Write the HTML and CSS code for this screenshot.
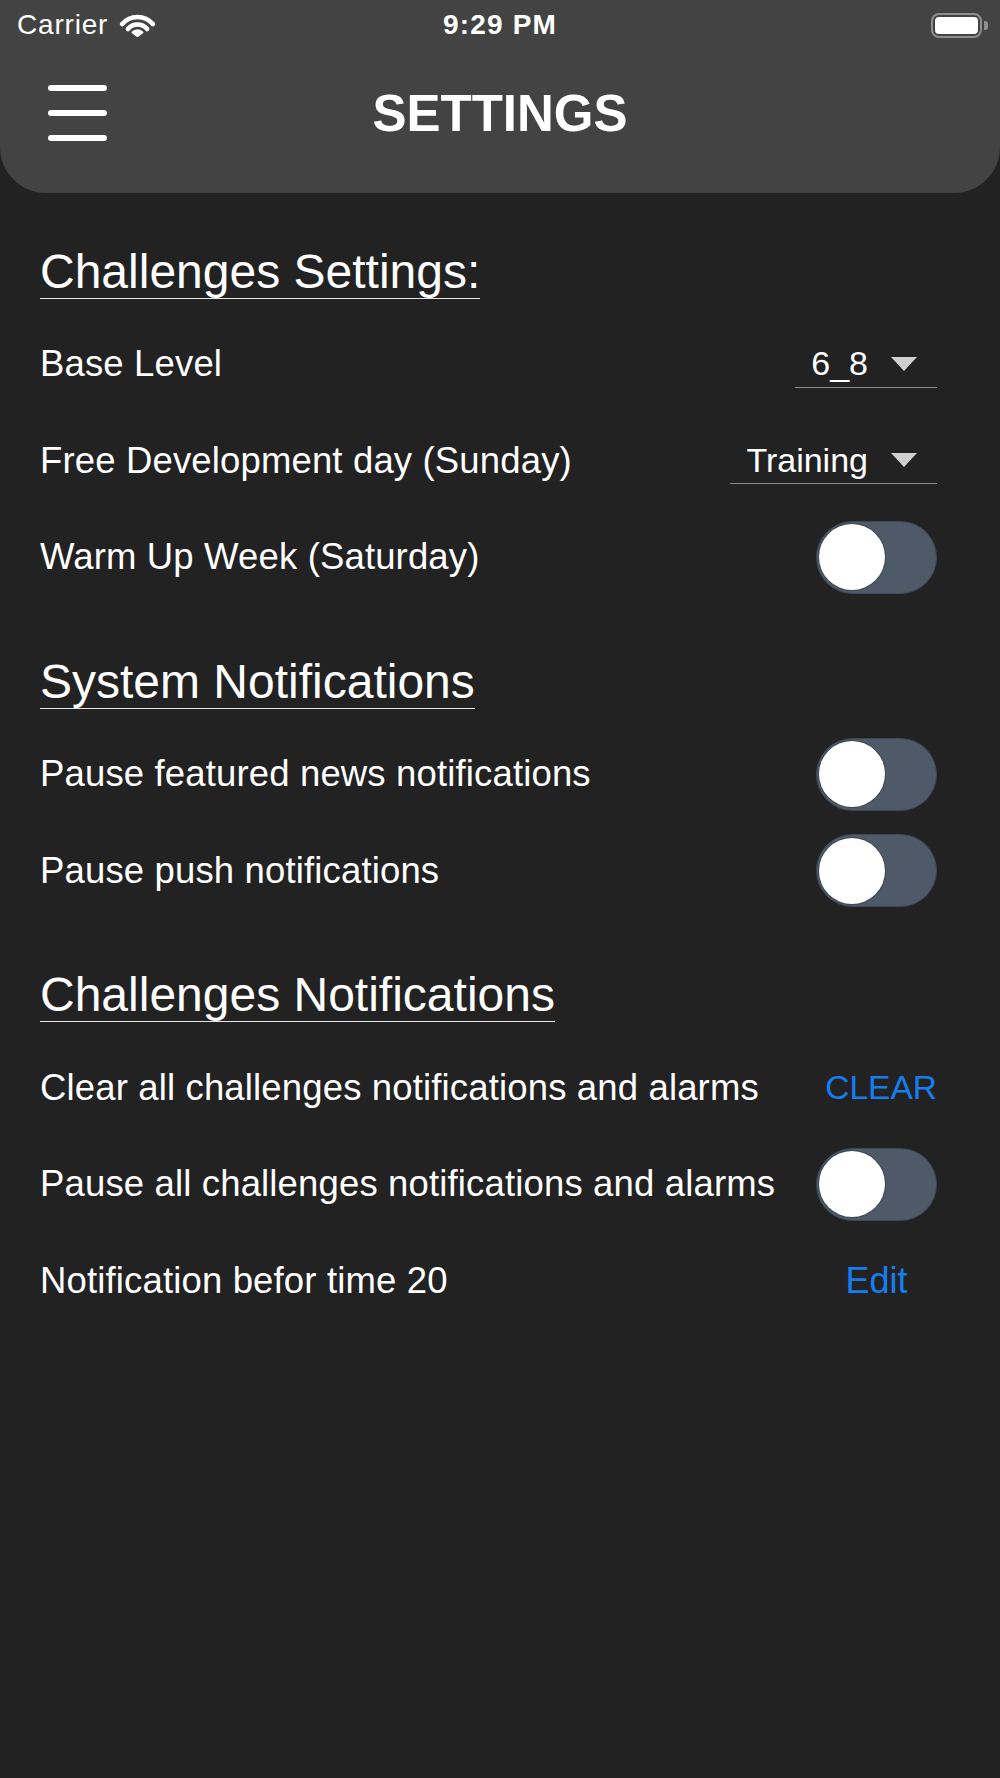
FILE: index.html
```html
<!DOCTYPE html>
<html lang="en">

<head>
    <title>Settings</title>
    <meta charset="UTF-8">
    <link rel="stylesheet" href="styles.css">
</head>

<body>
<!-- 상단 바 -->
<div class="top-bar">
    <div class="status-bar">
        <div class="status-left">
            <span class="carrier">Carrier</span>
            <svg class="wifi" viewBox="0 0 37 24">
                <path d="M3.2 11.1 A20 20 0 0 1 33.8 11.1" fill="none" stroke="#fff" stroke-width="4.6" stroke-linecap="round"/>
                <path d="M8.9 16 A12.5 12.5 0 0 1 28.1 16" fill="none" stroke="#fff" stroke-width="4.6" stroke-linecap="round"/>
                <path d="M18.5 23.5 L13.3 19.3 A6.8 6.8 0 0 1 23.7 19.3 Z" fill="#fff" stroke="#fff" stroke-width="1.5" stroke-linejoin="round"/>
            </svg>
        </div>
        <span class="clock">9:29 PM</span>
        <div class="status-right">
            <div class="battery"><div class="battery-level"></div></div>
            <div class="battery-cap"></div>
        </div>
    </div>
    <div class="nav-bar">
        <div class="menu-button">
            <span></span>
            <span></span>
            <span></span>
        </div>
        <h1 class="title">SETTINGS</h1>
        <div></div>
    </div>
</div>

<main class="settings">
    <!-- 챌린지 설정 -->
    <section class="group">
        <h2 class="group-title"><span>Challenges Settings:</span></h2>
        <div class="row">
            <span class="label">Base Level</span>
            <div class="dropdown"><span>6_8</span><i class="arrow"></i></div>
        </div>
        <div class="row">
            <span class="label">Free Development day (Sunday)</span>
            <div class="dropdown"><span>Training</span><i class="arrow"></i></div>
        </div>
        <div class="row">
            <span class="label">Warm Up Week (Saturday)</span>
            <div class="toggle"><div class="knob"></div></div>
        </div>
    </section>

    <!-- 시스템 알림 -->
    <section class="group">
        <h2 class="group-title"><span>System Notifications</span></h2>
        <div class="row">
            <span class="label">Pause featured news notifications</span>
            <div class="toggle"><div class="knob"></div></div>
        </div>
        <div class="row">
            <span class="label">Pause push notifications</span>
            <div class="toggle"><div class="knob"></div></div>
        </div>
    </section>

    <!-- 챌린지 알림 -->
    <section class="group">
        <h2 class="group-title"><span>Challenges Notifications</span></h2>
        <div class="row">
            <span class="label">Clear all challenges notifications and alarms</span>
            <span class="link link-clear">CLEAR</span>
        </div>
        <div class="row">
            <span class="label">Pause all challenges notifications and alarms</span>
            <div class="toggle"><div class="knob"></div></div>
        </div>
        <div class="row">
            <span class="label">Notification befor time 20</span>
            <span class="link link-edit">Edit</span>
        </div>
    </section>
</main>
</body>

</html>
```

FILE: styles.css
```css
/* 전체 배경 */
body {
    margin: 0;
    padding: 0;
    background-color: #222222;
    color: #ffffff;
    font-family: 'Liberation Sans', Arial, sans-serif;
}

/* 상단 바 */
.top-bar {
    background-color: #434343;
    border-radius: 0 0 46px 46px;
    padding-bottom: 17px;
}

.status-bar {
    display: grid;
    grid-template-columns: 1fr auto 1fr;
    align-items: center;
    height: 50px;
}

.status-left {
    display: flex;
    align-items: center;
    gap: 11px;
    padding-left: 17px;
}

.carrier {
    font-size: 28px;
    letter-spacing: 0.8px;
}

.wifi {
    width: 37px;
    height: 24px;
}

.clock {
    font-size: 28px;
    font-weight: bold;
    letter-spacing: 1.2px;
}

.status-right {
    display: flex;
    justify-content: flex-end;
    align-items: center;
    gap: 2px;
    padding-right: 12px;
}

.battery {
    box-sizing: border-box;
    width: 51px;
    height: 25px;
    border: 2px solid rgba(255, 255, 255, 0.4);
    border-radius: 8px;
    padding: 2px;
}

.battery-level {
    height: 100%;
    background-color: #ffffff;
    border-radius: 4px;
}

.battery-cap {
    width: 4px;
    height: 9px;
    background-color: rgba(255, 255, 255, 0.4);
    border-radius: 0 3px 3px 0;
}

.nav-bar {
    display: grid;
    grid-template-columns: 1fr auto 1fr;
    align-items: center;
    height: 126px;
}

.menu-button {
    display: flex;
    flex-direction: column;
    gap: 19px;
    width: 59px;
    margin-left: 48px;
    cursor: pointer;
}

.menu-button span {
    display: block;
    height: 6px;
    background-color: #ffffff;
    border-radius: 3px;
}

.title {
    margin: 0;
    font-size: 51px;
    font-weight: bold;
}

/* 설정 목록 */
.settings {
    padding: 0 63px 0 40px;
}

.group {
    padding-top: 52px;
}

.group:first-child {
    padding-top: 54.5px;
}

.group-title {
    display: flex;
    margin: 0 0 17.5px;
    font-size: 48px;
    font-weight: normal;
    line-height: 48px;
}

.group-title span {
    padding-bottom: 2px;
    border-bottom: 1.5px solid #e6e6e6;
}

.row {
    display: flex;
    justify-content: space-between;
    align-items: center;
    height: 96.5px;
}

.label {
    font-size: 36.5px;
    letter-spacing: 0.15px;
    white-space: nowrap;
}

/* 드롭다운 */
.dropdown {
    display: flex;
    align-items: center;
    gap: 23px;
    height: 46px;
    padding: 0 20px 0 16px;
    border-bottom: 1.5px solid #8c8c8c;
    font-size: 34px;
}

.arrow {
    width: 0;
    height: 0;
    border-left: 13.5px solid transparent;
    border-right: 13.5px solid transparent;
    border-top: 14px solid #cfcfcf;
}

/* 토글 */
.toggle {
    box-sizing: border-box;
    display: flex;
    align-items: center;
    width: 121px;
    height: 73px;
    padding: 1.5px;
    border: 1.5px solid #3c4857;
    border-radius: 37px;
    background-color: #4e5a68;
    flex-shrink: 0;
}

.knob {
    width: 66px;
    height: 66px;
    border-radius: 50%;
    background-color: #ffffff;
    box-shadow: 0 0 0 1px rgba(0, 0, 0, 0.2);
}

/* 링크 버튼 */
.link {
    color: #147ef0;
    cursor: pointer;
}

.link-clear {
    font-size: 33.5px;
}

.link-edit {
    width: 121px;
    font-size: 36px;
    text-align: center;
}
```
